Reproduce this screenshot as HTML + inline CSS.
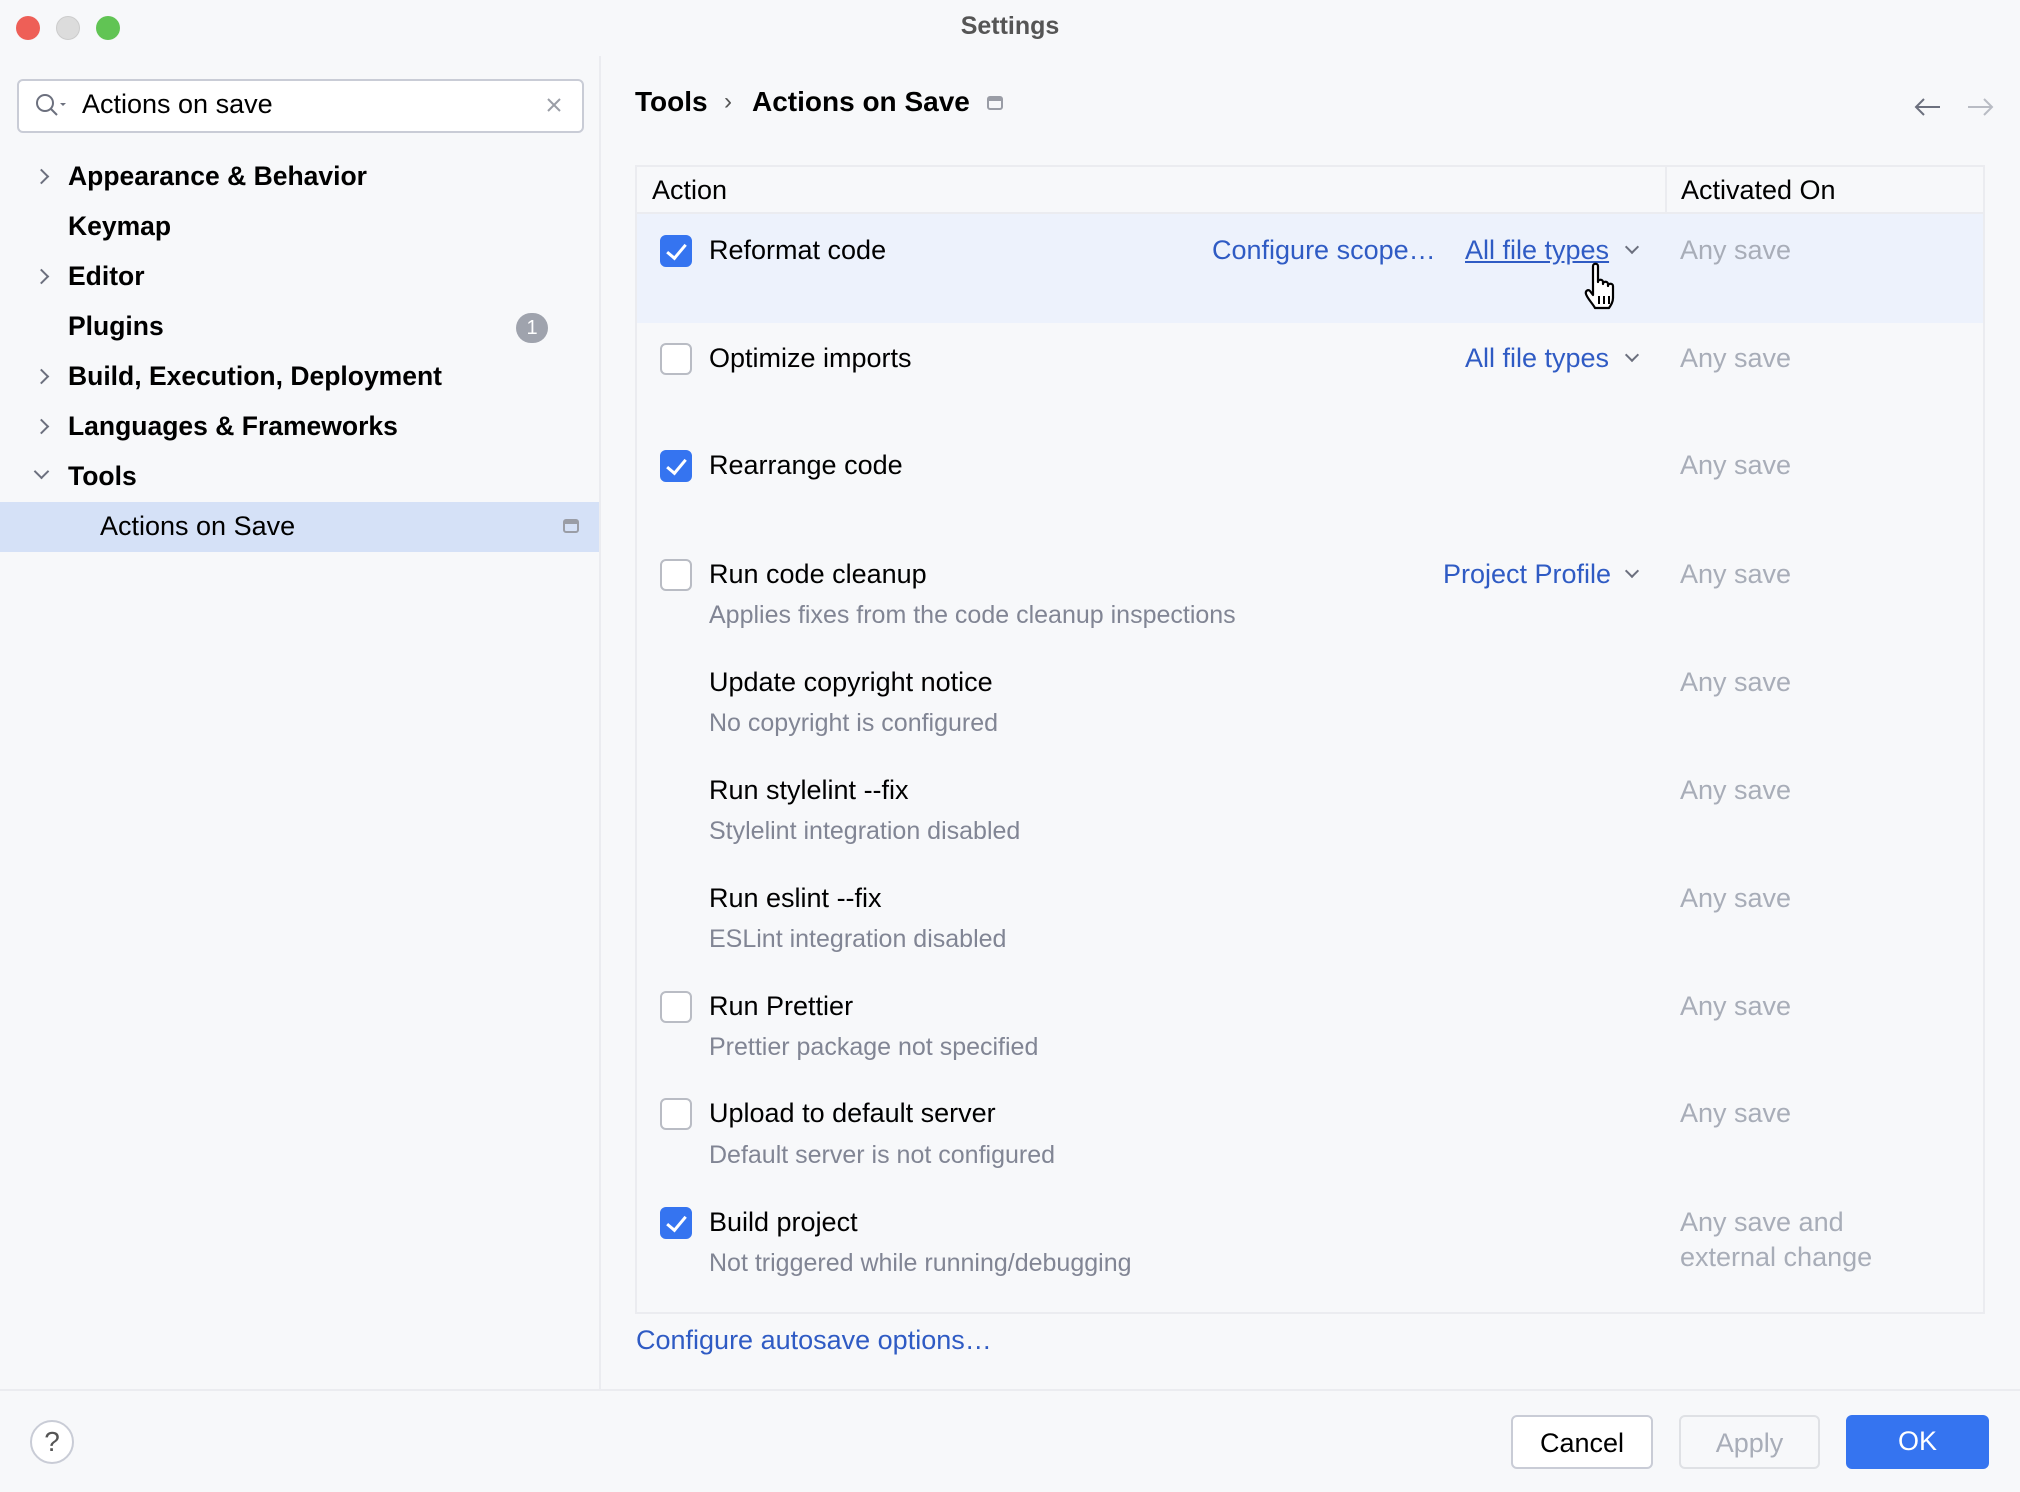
<!DOCTYPE html>
<html><head><meta charset="utf-8"><style>
*{margin:0;padding:0;box-sizing:border-box}
body{width:2020px;height:1492px;background:#f7f8fa;font-family:"Liberation Sans",sans-serif;color:#000;position:relative;overflow:hidden}
.a{position:absolute;white-space:nowrap}
.dot{position:absolute;top:16px;width:24px;height:24px;border-radius:50%}
.tree{font-size:26.5px;font-weight:bold;left:68px}
.chev{position:absolute;left:36px;width:11px;height:11px;border-right:2px solid #6c707e;border-bottom:2px solid #6c707e;transform:rotate(-45deg)}
.t{font-size:27px;left:709px}
.s{font-size:25px;color:#818594;left:709px}
.any{font-size:27px;color:#a8adb8;left:1680px}
.cb{position:absolute;left:660px;width:32px;height:32px;border-radius:6px;border:2px solid #b9bcc4;background:#fff}
.cb.on{background:#3574f0;border-color:#3574f0}
.cb.on:after{content:"";position:absolute;left:9px;top:3px;width:8px;height:16px;border-right:3px solid #fff;border-bottom:3px solid #fff;transform:rotate(40deg)}
.link{font-size:27px;color:#2f5bc4}
.dd{position:absolute;width:10px;height:10px;border-right:2px solid #6c707e;border-bottom:2px solid #6c707e;transform:rotate(45deg)}
.btn{position:absolute;top:1415px;height:54px;border-radius:6px;font-size:27px;text-align:center;line-height:52px}
</style></head><body>
<div class="dot" style="left:16px;background:#ee5f57"></div>
<div class="dot" style="left:56px;background:#dcdcdc;border:1px solid #ccc"></div>
<div class="dot" style="left:96px;background:#61c454"></div>
<div class="a" style="left:0;width:2020px;text-align:center;top:12px;font-size:25px;font-weight:bold;color:#555">Settings</div>

<div style="position:absolute;left:599px;top:56px;width:2px;height:1334px;background:#ebecf0"></div>
<div style="position:absolute;left:17px;top:79px;width:567px;height:54px;border:2px solid #c9ccd6;border-radius:6px;background:#fff"></div>
<svg class="a" style="left:34px;top:92px" width="36" height="30" viewBox="0 0 36 30"><circle cx="11" cy="11" r="8" fill="none" stroke="#6c707e" stroke-width="2"/><line x1="17" y1="17" x2="23" y2="23" stroke="#6c707e" stroke-width="2"/><path d="M26 11l3 3 3-3z" fill="#6c707e"/></svg>
<div class="a" style="left:82px;top:89px;font-size:27px">Actions on save</div>
<svg class="a" style="left:546px;top:97px" width="16" height="16"><path d="M2 2L14 14M14 2L2 14" stroke="#9a9da6" stroke-width="2"/></svg>

<div class="chev" style="top:171px"></div><div class="a tree" style="top:161px">Appearance &amp; Behavior</div>
<div class="a tree" style="top:211px">Keymap</div>
<div class="chev" style="top:271px"></div><div class="a tree" style="top:261px">Editor</div>
<div class="a tree" style="top:311px">Plugins</div>
<div class="a" style="left:516px;top:313px;width:32px;height:30px;border-radius:15px;background:#9fa3ad;color:#fff;font-size:20px;text-align:center;line-height:30px">1</div>
<div class="chev" style="top:371px"></div><div class="a tree" style="top:361px">Build, Execution, Deployment</div>
<div class="chev" style="top:421px"></div><div class="a tree" style="top:411px">Languages &amp; Frameworks</div>
<div class="chev" style="top:466px;transform:rotate(45deg)"></div><div class="a tree" style="top:461px">Tools</div>
<div style="position:absolute;left:0;top:502px;width:599px;height:50px;background:#d5e1f7"></div>
<div class="a" style="left:100px;top:511px;font-size:27px">Actions on Save</div>
<div class="a" style="left:563px;top:519px;width:16px;height:14px;border:2px solid #9a9da6;border-radius:3px;border-top-width:5px"></div>

<div class="a" style="left:635px;top:86px;font-size:28px;font-weight:bold">Tools</div>
<div class="a" style="left:724px;top:88px;font-size:24px;color:#555">›</div>
<div class="a" style="left:752px;top:86px;font-size:28px;font-weight:bold">Actions on Save</div>
<div class="a" style="left:987px;top:96px;width:16px;height:14px;border:2px solid #9a9da6;border-radius:3px;border-top-width:5px"></div>
<svg class="a" style="left:1914px;top:95px" width="80" height="24"><path d="M26 12H2M10 4L2 12l8 8" fill="none" stroke="#6c707e" stroke-width="2"/><path d="M54 12h24M70 4l8 8-8 8" fill="none" stroke="#b9bcc4" stroke-width="2"/></svg>

<div style="position:absolute;left:635px;top:165px;width:1350px;height:1149px;border:2px solid #ebecf0;background:#f7f8fa"></div>
<div style="position:absolute;left:637px;top:212px;width:1346px;height:2px;background:#ebecf0"></div>
<div style="position:absolute;left:1665px;top:167px;width:2px;height:45px;background:#ebecf0"></div>
<div class="a" style="left:652px;top:175px;font-size:27px">Action</div>
<div class="a" style="left:1681px;top:175px;font-size:27px">Activated On</div>
<div style="position:absolute;left:637px;top:214px;width:1346px;height:109px;background:#edf2fc"></div>

<div class="cb on" style="top:235px"></div><div class="a t" style="top:235px">Reformat code</div>
<div class="a link" style="left:1212px;top:235px">Configure scope…</div>
<div class="a link" style="left:1465px;top:235px;text-decoration:underline">All file types</div><div class="dd" style="left:1627px;top:242px"></div>
<svg class="a" style="left:1583px;top:262px" width="42" height="50" viewBox="0 0 42 50"><path d="M10 4c0-3 5-3 5 0v16c0-3 5-3 5 0v2c0-3 5-3 5 0v2c0-3 5-3 5 0v12c0 4-2 7-4 10H12c-2-4-8-10-9-14-1-3 2-5 4-3l3 4z" fill="#fff" stroke="#000" stroke-width="2.2" stroke-linejoin="round"/><path d="M16 34v8M21 34v8M26 34v8" stroke="#000" stroke-width="2"/></svg>
<div class="a any" style="top:235px">Any save</div>

<div class="cb" style="top:343px"></div><div class="a t" style="top:343px">Optimize imports</div>
<div class="a link" style="left:1465px;top:343px">All file types</div><div class="dd" style="left:1627px;top:350px"></div>
<div class="a any" style="top:343px">Any save</div>

<div class="cb on" style="top:450px"></div><div class="a t" style="top:450px">Rearrange code</div>
<div class="a any" style="top:450px">Any save</div>

<div class="cb" style="top:559px"></div><div class="a t" style="top:559px">Run code cleanup</div>
<div class="a s" style="top:601px">Applies fixes from the code cleanup inspections</div>
<div class="a link" style="left:1443px;top:559px">Project Profile</div><div class="dd" style="left:1627px;top:566px"></div>
<div class="a any" style="top:559px">Any save</div>

<div class="a t" style="top:667px">Update copyright notice</div>
<div class="a s" style="top:709px">No copyright is configured</div>
<div class="a any" style="top:667px">Any save</div>

<div class="a t" style="top:775px">Run stylelint --fix</div>
<div class="a s" style="top:817px">Stylelint integration disabled</div>
<div class="a any" style="top:775px">Any save</div>

<div class="a t" style="top:883px">Run eslint --fix</div>
<div class="a s" style="top:925px">ESLint integration disabled</div>
<div class="a any" style="top:883px">Any save</div>

<div class="cb" style="top:991px"></div><div class="a t" style="top:991px">Run Prettier</div>
<div class="a s" style="top:1033px">Prettier package not specified</div>
<div class="a any" style="top:991px">Any save</div>

<div class="cb" style="top:1098px"></div><div class="a t" style="top:1098px">Upload to default server</div>
<div class="a s" style="top:1141px">Default server is not configured</div>
<div class="a any" style="top:1098px">Any save</div>

<div class="cb on" style="top:1207px"></div><div class="a t" style="top:1207px">Build project</div>
<div class="a s" style="top:1249px">Not triggered while running/debugging</div>
<div class="a any" style="top:1205px;line-height:35px;white-space:normal;width:260px">Any save and external change</div>

<div class="a link" style="left:636px;top:1325px">Configure autosave options…</div>

<div style="position:absolute;left:0;top:1389px;width:2020px;height:2px;background:#ebecf0"></div>
<div class="a" style="left:30px;top:1420px;width:44px;height:44px;border-radius:50%;border:2px solid #c9ccd6;background:#fff;text-align:center;font-size:28px;line-height:40px;color:#555">?</div>
<div class="btn" style="left:1511px;width:142px;border:2px solid #c9ccd6;background:#fff">Cancel</div>
<div class="btn" style="left:1679px;width:141px;border:2px solid #dfe1e5;color:#a8adb8">Apply</div>
<div class="btn" style="left:1846px;width:143px;background:#3574f0;color:#fff">OK</div>
</body></html>
